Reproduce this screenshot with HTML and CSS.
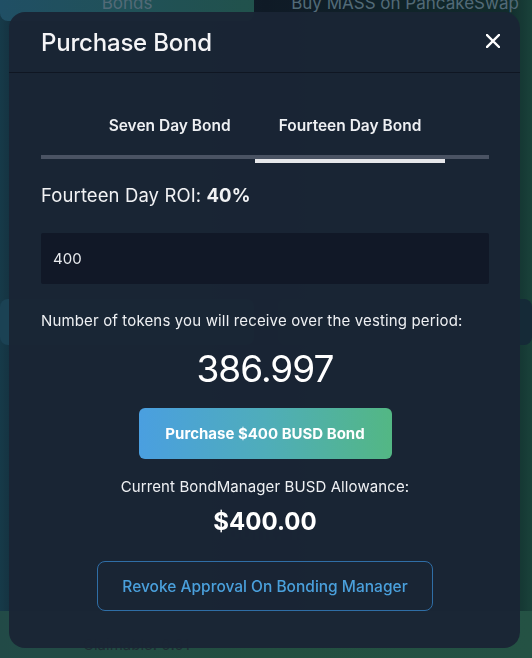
FILE: index.html
```html
<!DOCTYPE html>
<html lang="en">
<head>
<meta charset="utf-8">
<title>Purchase Bond</title>
<link rel="stylesheet" href="styles.css">
</head>
<body>
<div class="page">
  <nav class="nav">
    <div class="nav-tab nav-tab-active">Bonds</div>
    <div class="nav-tab">Buy MASS on PancakeSwap</div>
  </nav>
  <div class="bg-row">
    <div class="bg-card bg-card-blue"></div>
    <div class="bg-card"></div>
  </div>
  <div class="bg-stats">
    <div class="bg-amount">Amount: 139.79</div>
    <div class="bg-line">Claimed: 13.04</div>
  </div>
  <div class="bg-footer">
    <div class="bg-line">Claimable: 0.01</div>
  </div>
</div>

<div class="backdrop"></div>

<div class="modal" role="dialog" aria-labelledby="modal-title">
  <header class="modal-header">
    <h2 id="modal-title" class="modal-title">Purchase Bond</h2>
    <button class="close-btn" aria-label="Close">
      <svg width="14" height="14" viewBox="0 0 14 14" aria-hidden="true">
        <path d="M1 1 L13 13 M13 1 L1 13" stroke="#ffffff" stroke-width="2.4" stroke-linecap="square" fill="none"/>
      </svg>
    </button>
  </header>
  <div class="modal-body">
    <div class="tabs">
      <button class="tab">Seven Day Bond</button>
      <button class="tab tab-active">Fourteen Day Bond</button>
    </div>
    <p class="roi">Fourteen Day ROI: <strong>40%</strong></p>
    <input class="amount-input" type="text" value="400">
    <p class="label">Number of tokens you will receive over the vesting period:</p>
    <p class="tokens">386.997</p>
    <button class="purchase-btn">Purchase $400 BUSD Bond</button>
    <p class="allowance-label">Current BondManager BUSD Allowance:</p>
    <p class="allowance">$400.00</p>
    <button class="revoke-btn">Revoke Approval On Bonding Manager</button>
  </div>
</div>
</body>
</html>
```

FILE: styles.css
```css
* { box-sizing: border-box; }

html, body {
  margin: 0;
  height: 658px;
  overflow: hidden;
}

body {
  font-family: Inter, "Noto Sans", "Liberation Sans", sans-serif;
  color: #f3f4f6;
  background: linear-gradient(90deg, #1d4a5b 0%, #16303f 5%, #131f2d 50%, #163634 95%, #215447 100%);
}

.page {
  height: 658px;
  display: flex;
  flex-direction: column;
}

.nav {
  display: flex;
  gap: 24px;
  margin-top: -14px;
  height: 36px;
}

.nav-tab {
  flex: 1;
  display: flex;
  align-items: center;
  justify-content: center;
  font-size: 17px;
  color: #6d8a99;
  border-radius: 8px;
}

.nav-tab-active {
  background: linear-gradient(90deg, #2a6680, #2b6a5f);
}

.bg-row {
  display: flex;
  gap: 24px;
  margin-top: 278px;
  height: 48px;
}

.bg-card {
  flex: 1;
  border-radius: 8px;
  background: #1b3443;
}

.bg-card-blue {
  background: #23546a;
}

.bg-stats {
  flex: 1;
  padding: 174px 0 0 190px;
  color: #1f2d3b;
}

.bg-amount {
  font-size: 22px;
  line-height: 26px;
  font-weight: 700;
}

.bg-line {
  font-size: 15px;
  line-height: 20px;
}

.bg-stats .bg-line {
  margin: 46px 0 0 -94px;
}

.bg-footer {
  height: 48px;
  background: linear-gradient(90deg, #2c5f58, #2e6650 50%, #2f6a55);
  padding-left: 83px;
  color: #28383f;
}

.bg-footer .bg-line {
  margin-top: 24px;
}

.backdrop {
  position: fixed;
  inset: 0;
  background: rgba(4, 10, 18, 0.25);
}

.modal {
  position: absolute;
  left: 9px;
  top: 12px;
  width: 511px;
  height: 636px;
  border-radius: 16px;
  background: rgba(26, 37, 53, 0.97);
  display: flex;
  flex-direction: column;
}

.modal-header {
  height: 61px;
  display: flex;
  align-items: center;
  justify-content: space-between;
  padding: 0 20px 0 32px;
  border-bottom: 1px solid #0f1622;
}

.modal-title {
  margin: 0;
  font-size: 24px;
  font-weight: 500;
  letter-spacing: -0.2px;
  color: #f5f5f7;
}

.close-btn {
  background: none;
  border: 0;
  padding: 0;
  width: 14px;
  height: 14px;
  display: flex;
  margin-top: -2px;
  cursor: pointer;
}

.modal-body {
  padding: 35px 31px 0 32px;
  display: flex;
  flex-direction: column;
  align-items: center;
}

.tabs {
  align-self: stretch;
  display: flex;
  justify-content: center;
  border-bottom: 4px solid #4a5363;
  height: 51px;
}

.tab {
  font-family: inherit;
  background: none;
  border: 0;
  border-bottom: 4px solid transparent;
  margin-bottom: -4px;
  padding: 8px 24px 0;
  height: 55px;
  align-self: flex-start;
  display: flex;
  align-items: flex-start;
  font-size: 15.5px;
  font-weight: 600;
  line-height: 20px;
  color: #eef0f3;
  cursor: pointer;
}

.tab-active {
  border-bottom-color: #e6e7ea;
}

.roi {
  align-self: stretch;
  margin: 24px 0 0;
  font-size: 18.5px;
  line-height: 24px;
  letter-spacing: 0.1px;
  color: #f1f2f4;
}

.roi strong {
  font-weight: 700;
}

.amount-input {
  align-self: stretch;
  margin-top: 26px;
  height: 51px;
  border: 0;
  border-radius: 2px;
  background: #111827;
  color: #e8eaee;
  font-family: inherit;
  font-size: 15px;
  padding: 0 12px;
  outline: none;
}

.label {
  align-self: stretch;
  margin: 27px 0 0;
  font-size: 15px;
  line-height: 20px;
  letter-spacing: 0.15px;
  color: #eef0f3;
}

.tokens {
  margin: 14px 0 0;
  font-size: 37px;
  line-height: 48px;
  letter-spacing: -1px;
  font-weight: 400;
  color: #ffffff;
}

.purchase-btn {
  margin-top: 15px;
  width: 253px;
  height: 51px;
  border: 0;
  border-radius: 6px;
  background: linear-gradient(90deg, #4a9fe0 0%, #4fadba 50%, #53b784 100%);
  color: #ffffff;
  font-family: inherit;
  font-size: 15px;
  font-weight: 700;
  cursor: pointer;
}

.allowance-label {
  margin: 18px 0 0;
  font-size: 15px;
  line-height: 20px;
  letter-spacing: 0.1px;
  color: #eef0f3;
}

.allowance {
  position: relative;
  margin: 10px 0 0;
  font-size: 24px;
  line-height: 30px;
  font-weight: 700;
  color: #ffffff;
}

.revoke-btn {
  margin-top: 24px;
  width: 336px;
  height: 50px;
  border: 1px solid #2f6ea6;
  border-radius: 8px;
  background: transparent;
  color: #4aa0dc;
  font-family: inherit;
  font-size: 15.5px;
  font-weight: 500;
  cursor: pointer;
}
```
